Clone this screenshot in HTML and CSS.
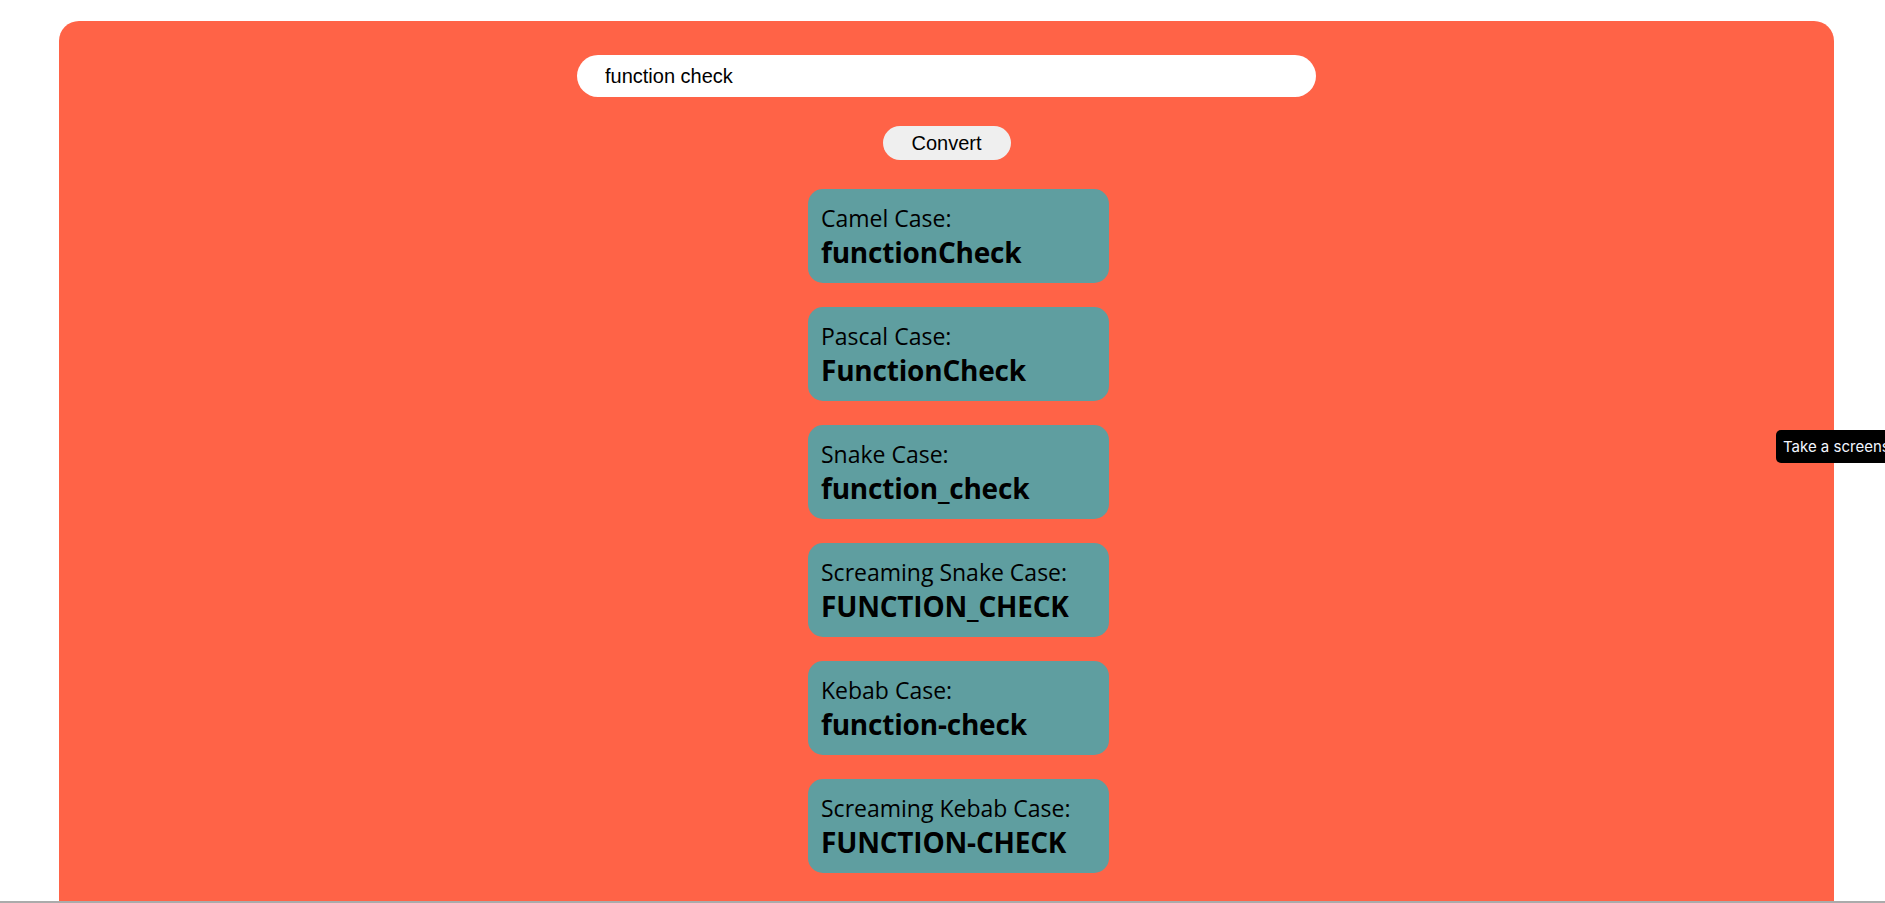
FILE: index.html
```html
<!DOCTYPE html>
<html lang="en">
<head>
<meta charset="utf-8">
<title>Case Converter</title>
<link rel="stylesheet" href="styles.css">
</head>
<body>
<div class="page">
  <main class="app">
    <input class="text-input" type="text" value="function check">
    <button class="convert-btn" type="button">Convert</button>
    <div class="results">
      <div class="card"><div class="label">Camel Case:</div><div class="value">functionCheck</div></div>
      <div class="card"><div class="label">Pascal Case:</div><div class="value">FunctionCheck</div></div>
      <div class="card"><div class="label">Snake Case:</div><div class="value">function_check</div></div>
      <div class="card"><div class="label">Screaming Snake Case:</div><div class="value">FUNCTION_CHECK</div></div>
      <div class="card"><div class="label">Kebab Case:</div><div class="value">function-check</div></div>
      <div class="card"><div class="label">Screaming Kebab Case:</div><div class="value">FUNCTION-CHECK</div></div>
    </div>
  </main>
</div>
<div class="bottom-line"></div>
<div class="tooltip">Take a screenshot</div>
</body>
</html>
```

FILE: styles.css
```css
html, body {
  margin: 0;
  padding: 0;
}
body {
  height: 903px;
  overflow: hidden;
  display: flex;
  flex-direction: column;
  background: #ffffff;
  font-family: "Open Sans", "Noto Sans", sans-serif;
}
.page {
  flex: 1;
  min-height: 0;
  padding: 21px 51px 0 59px;
}
.app {
  height: 100%;
  background: #ff6347;
  border-radius: 20px 20px 0 0;
  display: flex;
  flex-direction: column;
  align-items: center;
  padding-top: 34px;
  box-sizing: border-box;
}
.text-input {
  width: 739px;
  height: 42px;
  box-sizing: border-box;
  border: none;
  outline: none;
  border-radius: 21px;
  background: #ffffff;
  padding: 0 0 0 28px;
  font-family: "Liberation Sans", Arial, sans-serif;
  font-size: 20px;
  color: #000000;
}
.convert-btn {
  margin-top: 29px;
  width: 128px;
  height: 34px;
  box-sizing: border-box;
  border: none;
  border-radius: 17px;
  background: #efefef;
  font-family: "Liberation Sans", Arial, sans-serif;
  font-size: 20px;
  color: #000000;
  padding: 0;
}
.results {
  margin-top: 29px;
  margin-left: 24px;
  display: flex;
  flex-direction: column;
  gap: 24px;
}
.card {
  width: 301px;
  height: 94px;
  box-sizing: border-box;
  background: #5f9ea0;
  border-radius: 15px;
  padding: 14px 13px 0 13px;
  color: #000000;
}
.label {
  font-size: 23px;
  line-height: 31px;
  white-space: nowrap;
}
.value {
  font-size: 28px;
  font-weight: 700;
  line-height: 36px;
  letter-spacing: -0.2px;
  white-space: nowrap;
}
.bottom-line {
  height: 2px;
  background: #ababab;
}
.tooltip {
  position: fixed;
  left: 1776px;
  top: 430px;
  height: 33px;
  line-height: 33px;
  padding: 0 7px;
  background: #000000;
  color: #f2f6ff;
  border-radius: 5px;
  font-family: Inter, Roboto, sans-serif;
  font-size: 15px;
  white-space: nowrap;
}
```
